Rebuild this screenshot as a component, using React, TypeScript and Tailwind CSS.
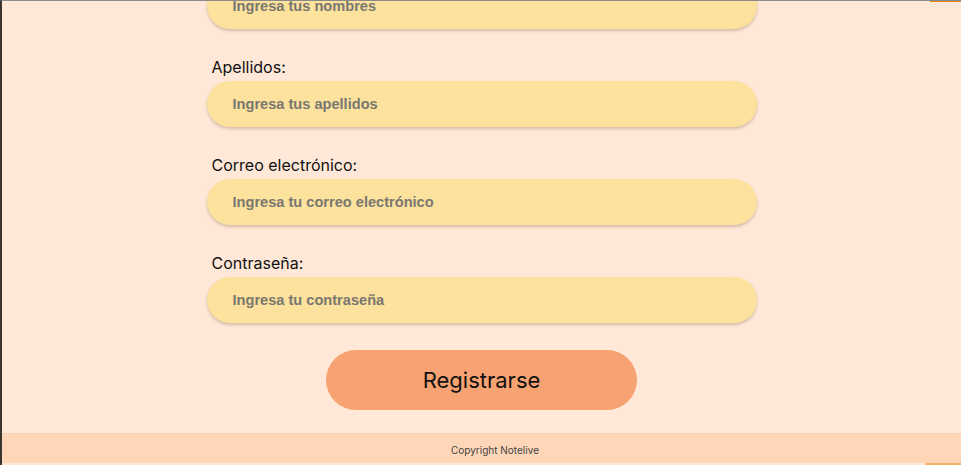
import React from "react";

const fields = [
  { label: "Nombres:", placeholder: "Ingresa tus nombres", type: "text" },
  { label: "Apellidos:", placeholder: "Ingresa tus apellidos", type: "text" },
  { label: "Correo electrónico:", placeholder: "Ingresa tu correo electrónico", type: "email" },
  { label: "Contraseña:", placeholder: "Ingresa tu contraseña", type: "password" },
];

export default function App() {
  return (
    <div className="relative h-[465px] w-[961px] overflow-hidden bg-[#FFE8D8] border-t border-t-[#8a8a8a] border-l-2 border-l-[#3a3530] font-['Inter',sans-serif]">
      {/* scrolled view of the signup form */}
      <div className="flex flex-col h-full">
        <form className="flex-1 flex flex-col items-center -mt-[44px]">
          <div className="w-[550px] flex flex-col gap-[26px]">
            {fields.map((f) => (
              <div key={f.label} className="flex flex-col">
                <label className="pl-[5px] text-[16px] leading-[24px] text-[#111] mb-[2px]">{f.label}</label>
                <input
                  type={f.type}
                  placeholder={f.placeholder}
                  className="h-[46px] w-full rounded-full bg-[#FCE29C] pl-[26px] pr-4 text-[14.6px] font-bold font-['Liberation_Sans',Arial,sans-serif] text-[#555] placeholder:text-[#7a7770] outline-none shadow-[0_2px_3px_rgba(120,90,60,0.3)]"
                />
              </div>
            ))}
          </div>
          <button
            type="button"
            className="mt-[27px] h-[60px] w-[311px] rounded-full bg-[#F7A272] text-[22px] text-[#111]"
          >
            Registrarse
          </button>
        </form>
        <footer className="h-[30px] mb-[2px] pl-[27px] pt-[3px] bg-[#FFD7B8] border-t border-t-[#f7d2b6] flex items-center justify-center text-[10px] text-[#444]">
          Copyright Notelive
        </footer>
      </div>
      <div className="absolute -top-px right-0 h-[2px] w-[31px] bg-[#E8861A]" />
      <div className="absolute bottom-0 right-0 h-[2px] w-[36px] bg-[#F6B26A]" />
    </div>
  );
}
